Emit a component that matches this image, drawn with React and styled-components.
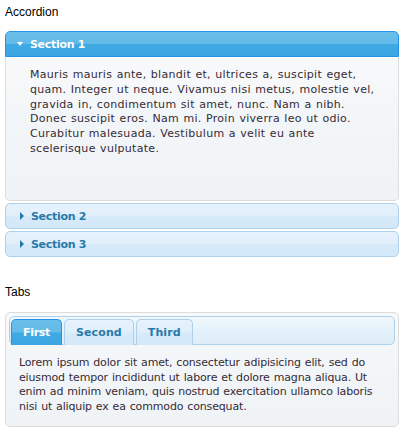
import React, { useState } from "react";
import styled, { createGlobalStyle, css } from "styled-components";

const GlobalStyle = createGlobalStyle`
  body {
    margin: 0;
    background: #fff;
  }
`;

const uiFont = `"DejaVu Sans", "Lucida Grande", Verdana, sans-serif`;

export const Page = styled.div`
  width: 404px;
  padding: 5px 5px 0 5px;
  box-sizing: border-box;
`;

export const Heading = styled.h2`
  margin: ${(p) => p.$top || 0}px 0 ${(p) => p.$gap || 12}px 0;
  font: normal 12px/14px "Liberation Sans", Arial, sans-serif;
  color: #000;
`;

export const Accordion = styled.div`
  display: flex;
  flex-direction: column;
  gap: 2px;
  width: 394px;
  font-family: ${uiFont};
`;

const activeState = css`
  background: linear-gradient(
    to bottom,
    #6bbfea 0%,
    #63bae8 48%,
    #3ea9e3 52%,
    #3ba6e1 100%
  );
  border: 1px solid #2694e8;
  color: #fff;
`;

const defaultState = css`
  background: linear-gradient(
    to bottom,
    #e6f2fc 0%,
    #e1effb 48%,
    #d6eaf9 52%,
    #d3e8f8 100%
  );
  border: 1px solid #aed0ea;
  color: #2779aa;
`;

const bodyText = css`
  color: #362b36;
  font-size: 11px;
  line-height: ${(p) => p.$lh || 14.8}px;
  letter-spacing: ${(p) => p.$spacing ?? -0.15}px;
  word-spacing: 0.6px;

  p {
    margin: 0;
  }
`;

export const Line = styled.span`
  display: block;
  white-space: nowrap;
`;

export const SectionHeader = styled.div`
  display: flex;
  align-items: center;
  height: 26px;
  box-sizing: border-box;
  padding: 0 0 0 11px;
  gap: 7px;
  font-size: 11px;
  font-weight: bold;
  letter-spacing: -0.3px;
  cursor: pointer;
  border-radius: ${(p) => (p.$open ? "5px 5px 0 0" : "5px")};
  ${(p) => (p.$open ? activeState : defaultState)}
`;

export const Arrow = styled.span`
  width: 0;
  height: 0;
  ${(p) =>
    p.$open
      ? css`
          border-left: 3.5px solid transparent;
          border-right: 3.5px solid transparent;
          border-top: 4px solid #fff;
        `
      : css`
          margin-left: 3px;
          border-top: 4px solid transparent;
          border-bottom: 4px solid transparent;
          border-left: 4px solid #2779aa;
        `}
`;

export const SectionBody = styled.div`
  height: 144px;
  box-sizing: border-box;
  margin-top: -2px;
  padding: 11px 24px;
  border: 1px solid #dddddd;
  border-top: 0;
  border-radius: 0 0 5px 5px;
  background: linear-gradient(to bottom, #f8f9fa 0%, #f3f6f8 40%, #eff3f6 100%);
  ${bodyText}
`;

export const TabsBox = styled.div`
  width: 394px;
  box-sizing: border-box;
  padding: 3px;
  border: 1px solid #dddddd;
  border-radius: 5px;
  background: linear-gradient(to bottom, #f8f9fa 0%, #f3f6f8 40%, #eff3f6 100%);
  font-family: ${uiFont};
`;

export const TabNav = styled.div`
  display: flex;
  gap: 2px;
  height: 29px;
  box-sizing: border-box;
  padding: 2px 2px 0 1px;
  border: 1px solid #aed0ea;
  border-radius: 5px;
  background: linear-gradient(to bottom, #f1f8fd 0%, #e5f1fa 50%, #deedf7 100%);
`;

export const Tab = styled.div`
  display: flex;
  align-items: center;
  height: 26px;
  box-sizing: border-box;
  padding: 0 11px;
  font-size: 11px;
  font-weight: bold;
  letter-spacing: ${(p) => (p.$active ? -0.3 : 0.1)}px;
  border-radius: 5px 5px 0 0;
  cursor: pointer;
  ${(p) => (p.$active ? activeState : defaultState)}
  border-bottom: 0;
`;

export const TabPanel = styled.div`
  padding: 11px 4px 8px 10px;
  ${bodyText}
`;

const sections = [
  {
    title: "Section 1",
    lines: [
      "Mauris mauris ante, blandit et, ultrices a, suscipit eget,",
      "quam. Integer ut neque. Vivamus nisi metus, molestie vel,",
      "gravida in, condimentum sit amet, nunc. Nam a nibh.",
      "Donec suscipit eros. Nam mi. Proin viverra leo ut odio.",
      "Curabitur malesuada. Vestibulum a velit eu ante",
      "scelerisque vulputate.",
    ],
  },
  {
    title: "Section 2",
    lines: [
      "Sed non urna. Donec et ante. Phasellus eu ligula.",
      "Vestibulum sit amet purus. Vivamus hendrerit, dolor at",
      "aliquet laoreet, mauris turpis porttitor velit, faucibus",
      "interdum tellus libero ac justo.",
    ],
  },
  {
    title: "Section 3",
    lines: [
      "Nam enim risus, molestie et, porta ac, aliquam ac, risus.",
      "Quisque lobortis. Phasellus pellentesque purus in massa.",
    ],
  },
];

const tabs = [
  {
    label: "First",
    text: "Lorem ipsum dolor sit amet, consectetur adipisicing elit, sed do eiusmod tempor incididunt ut labore et dolore magna aliqua. Ut enim ad minim veniam, quis nostrud exercitation ullamco laboris nisi ut aliquip ex ea commodo consequat.",
  },
  { label: "Second", text: "Phasellus mattis tincidunt nibh." },
  { label: "Third", text: "Nam dui erat, auctor a, dignissim quis." },
];

function App() {
  const [open, setOpen] = useState(0);
  const [tab, setTab] = useState(0);

  return (
    <Page>
      <GlobalStyle />
      <Heading>Accordion</Heading>
      <Accordion>
        {sections.map((s, i) => (
          <React.Fragment key={s.title}>
            <SectionHeader $open={open === i} onClick={() => setOpen(i)}>
              <Arrow $open={open === i} />
              {s.title}
            </SectionHeader>
            {open === i && (
              <SectionBody $spacing={0.3}>
                <p>
                  {s.lines.map((l) => (
                    <Line key={l}>{l}</Line>
                  ))}
                </p>
              </SectionBody>
            )}
          </React.Fragment>
        ))}
      </Accordion>
      <Heading $top={28} $gap={13}>
        Tabs
      </Heading>
      <TabsBox>
        <TabNav>
          {tabs.map((t, i) => (
            <Tab key={t.label} $active={tab === i} onClick={() => setTab(i)}>
              {t.label}
            </Tab>
          ))}
        </TabNav>
        <TabPanel $lh={14.7}>
          <p>{tabs[tab].text}</p>
        </TabPanel>
      </TabsBox>
    </Page>
  );
}

export default App;
